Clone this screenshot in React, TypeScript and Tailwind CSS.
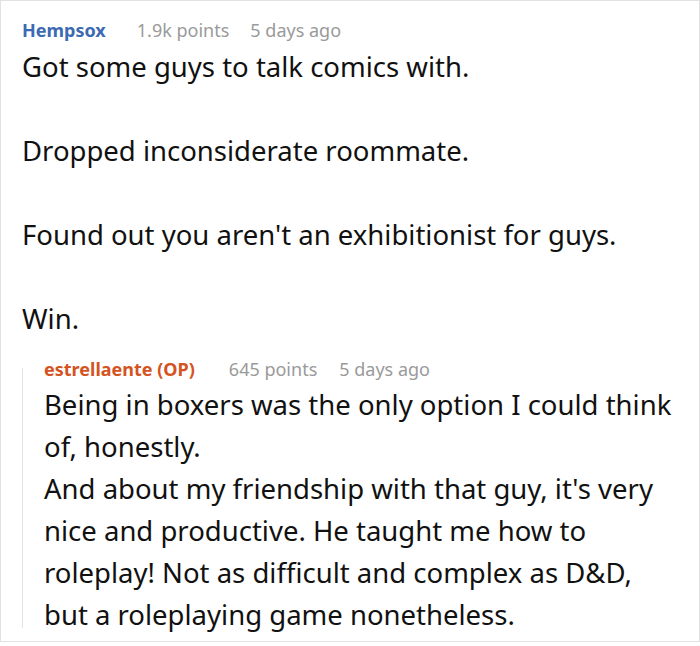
export default function App() {
  return (
    <div className="w-[700px] h-[646px] bg-white" style={{ fontFamily: '"Noto Sans", "Open Sans", sans-serif' }}>
      <div className="h-[642px] border border-[#e2e2e2] pl-[21px] pr-[18px] pt-[17px]">
        <div className="flex items-baseline text-[18px] leading-[24px]">
          <span className="font-bold text-[#3b6ab3]">Hempsox</span>
          <span className="ml-[31px] text-[#9a9a9a]">1.9k points</span>
          <span className="ml-[21px] text-[#9a9a9a]">5 days ago</span>
        </div>
        <div className="mt-[4px] text-[27.5px] leading-[42px] text-[#111]">
          <p>Got some guys to talk comics with.</p>
          <p className="mt-[42px]">Dropped inconsiderate roommate.</p>
          <p className="mt-[42px]">Found out you aren't an exhibitionist for guys.</p>
          <p className="mt-[42px]">Win.</p>
        </div>
        <div className="mt-[17px] flex">
          <div className="mt-[11px] mb-[8px] w-px bg-[#e2e2e2]" />
          <div className="ml-[21px] flex-1">
            <div className="flex items-baseline text-[18px] leading-[24px]">
              <span className="font-bold text-[#d4531f]">estrellaente (OP)</span>
              <span className="ml-[34px] text-[#9a9a9a]">645 points</span>
              <span className="ml-[22px] text-[#9a9a9a]">5 days ago</span>
            </div>
            <p className="mt-[3px] text-[27.5px] leading-[42px] text-[#111]">
              Being in boxers was the only option I could think of, honestly.
              <br />
              And about my friendship with that guy, it's very nice and productive. He taught me how to roleplay! Not as difficult and complex as D&amp;D, but a roleplaying game nonetheless.
            </p>
          </div>
        </div>
      </div>
    </div>
  );
}
